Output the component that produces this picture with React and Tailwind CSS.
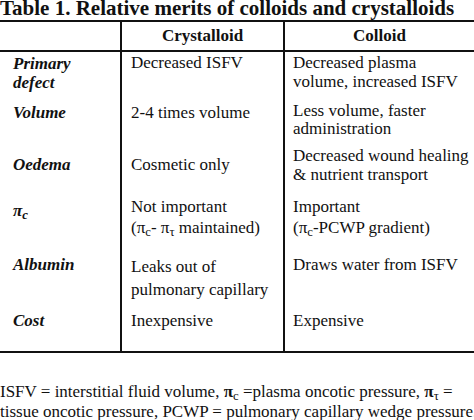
const rows = [
  {
    h: 'h-[48px]',
    label: <span className="block pt-[2px]">Primary<br />defect</span>,
    mid: <span className="block pt-[1px]">Decreased ISFV</span>,
    right: <span className="block pt-[1px]">Decreased plasma<br />volume, increased ISFV</span>,
  },
  {
    h: 'h-[43px]',
    label: <span className="block pt-[3px]">Volume</span>,
    mid: <span className="block pt-[3px]">2-4 times volume</span>,
    right: <span className="block pt-[2px] leading-[18px]">Less volume, faster<br />administration</span>,
  },
  {
    h: 'h-[52px]',
    label: <span className="block pt-[12px]">Oedema</span>,
    mid: <span className="block pt-[12px]">Cosmetic only</span>,
    right: <span className="block pt-[3px]">Decreased wound healing<br />&amp; nutrient transport</span>,
  },
  {
    h: 'h-[55px]',
    label: <span className="block pt-[6px]">π<sub>c</sub></span>,
    mid: (
      <span className="block pt-[1px] leading-[21px]">
        Not important<br />(π<sub>c</sub>- π<sub>τ</sub> maintained)
      </span>
    ),
    right: (
      <span className="block pt-[1px] leading-[21px]">
        Important<br />(π<sub>c</sub>-PCWP gradient)
      </span>
    ),
  },
  {
    h: 'h-[55px]',
    label: <span className="block pt-[5px]">Albumin</span>,
    mid: <span className="block pt-[5px] leading-[23px]">Leaks out of<br />pulmonary capillary</span>,
    right: <span className="block pt-[5px]">Draws water from ISFV</span>,
  },
  {
    h: 'h-[46px]',
    label: <span className="block pt-[6px]">Cost</span>,
    mid: <span className="block pt-[6px]">Inexpensive</span>,
    right: <span className="block pt-[6px]">Expensive</span>,
  },
];

export default function App() {
  return (
    <div className="w-[474px] h-[420px] overflow-hidden bg-white text-[#111] font-['Liberation_Serif']">
      <div className="text-[21px] font-bold leading-[14px] whitespace-nowrap pt-[1px]">
        Table 1. Relative merits of colloids and crystalloids
      </div>

      <div className="mt-[5px] border-t-2 border-b-2 border-[#111] text-[17px] leading-[19px]">
        <div className="grid grid-cols-[120px_163px_1fr] h-[30px] border-b-2 border-[#111] font-bold">
          <div />
          <div className="border-l-2 border-[#111] text-center pt-[4px]">Crystalloid</div>
          <div className="border-l-2 border-[#111] text-center pt-[4px]">Colloid</div>
        </div>

        {rows.map((r, i) => (
          <div key={i} className={`grid grid-cols-[120px_163px_1fr] ${r.h} whitespace-nowrap`}>
            <div className="pl-[13px] font-bold italic">{r.label}</div>
            <div className="border-l-2 border-[#111] pl-[9px]">{r.mid}</div>
            <div className="border-l-2 border-[#111] pl-[8px]">{r.right}</div>
          </div>
        ))}
      </div>

      <div className="mt-[29px] text-[17px] leading-[20px] whitespace-nowrap">
        <div>
          ISFV = interstitial fluid volume, <b>π</b><sub>c</sub> =plasma oncotic pressure, <b>π</b><sub>τ</sub> =
        </div>
        <div>tissue oncotic pressure, PCWP = pulmonary capillary wedge pressure.</div>
      </div>
    </div>
  );
}
